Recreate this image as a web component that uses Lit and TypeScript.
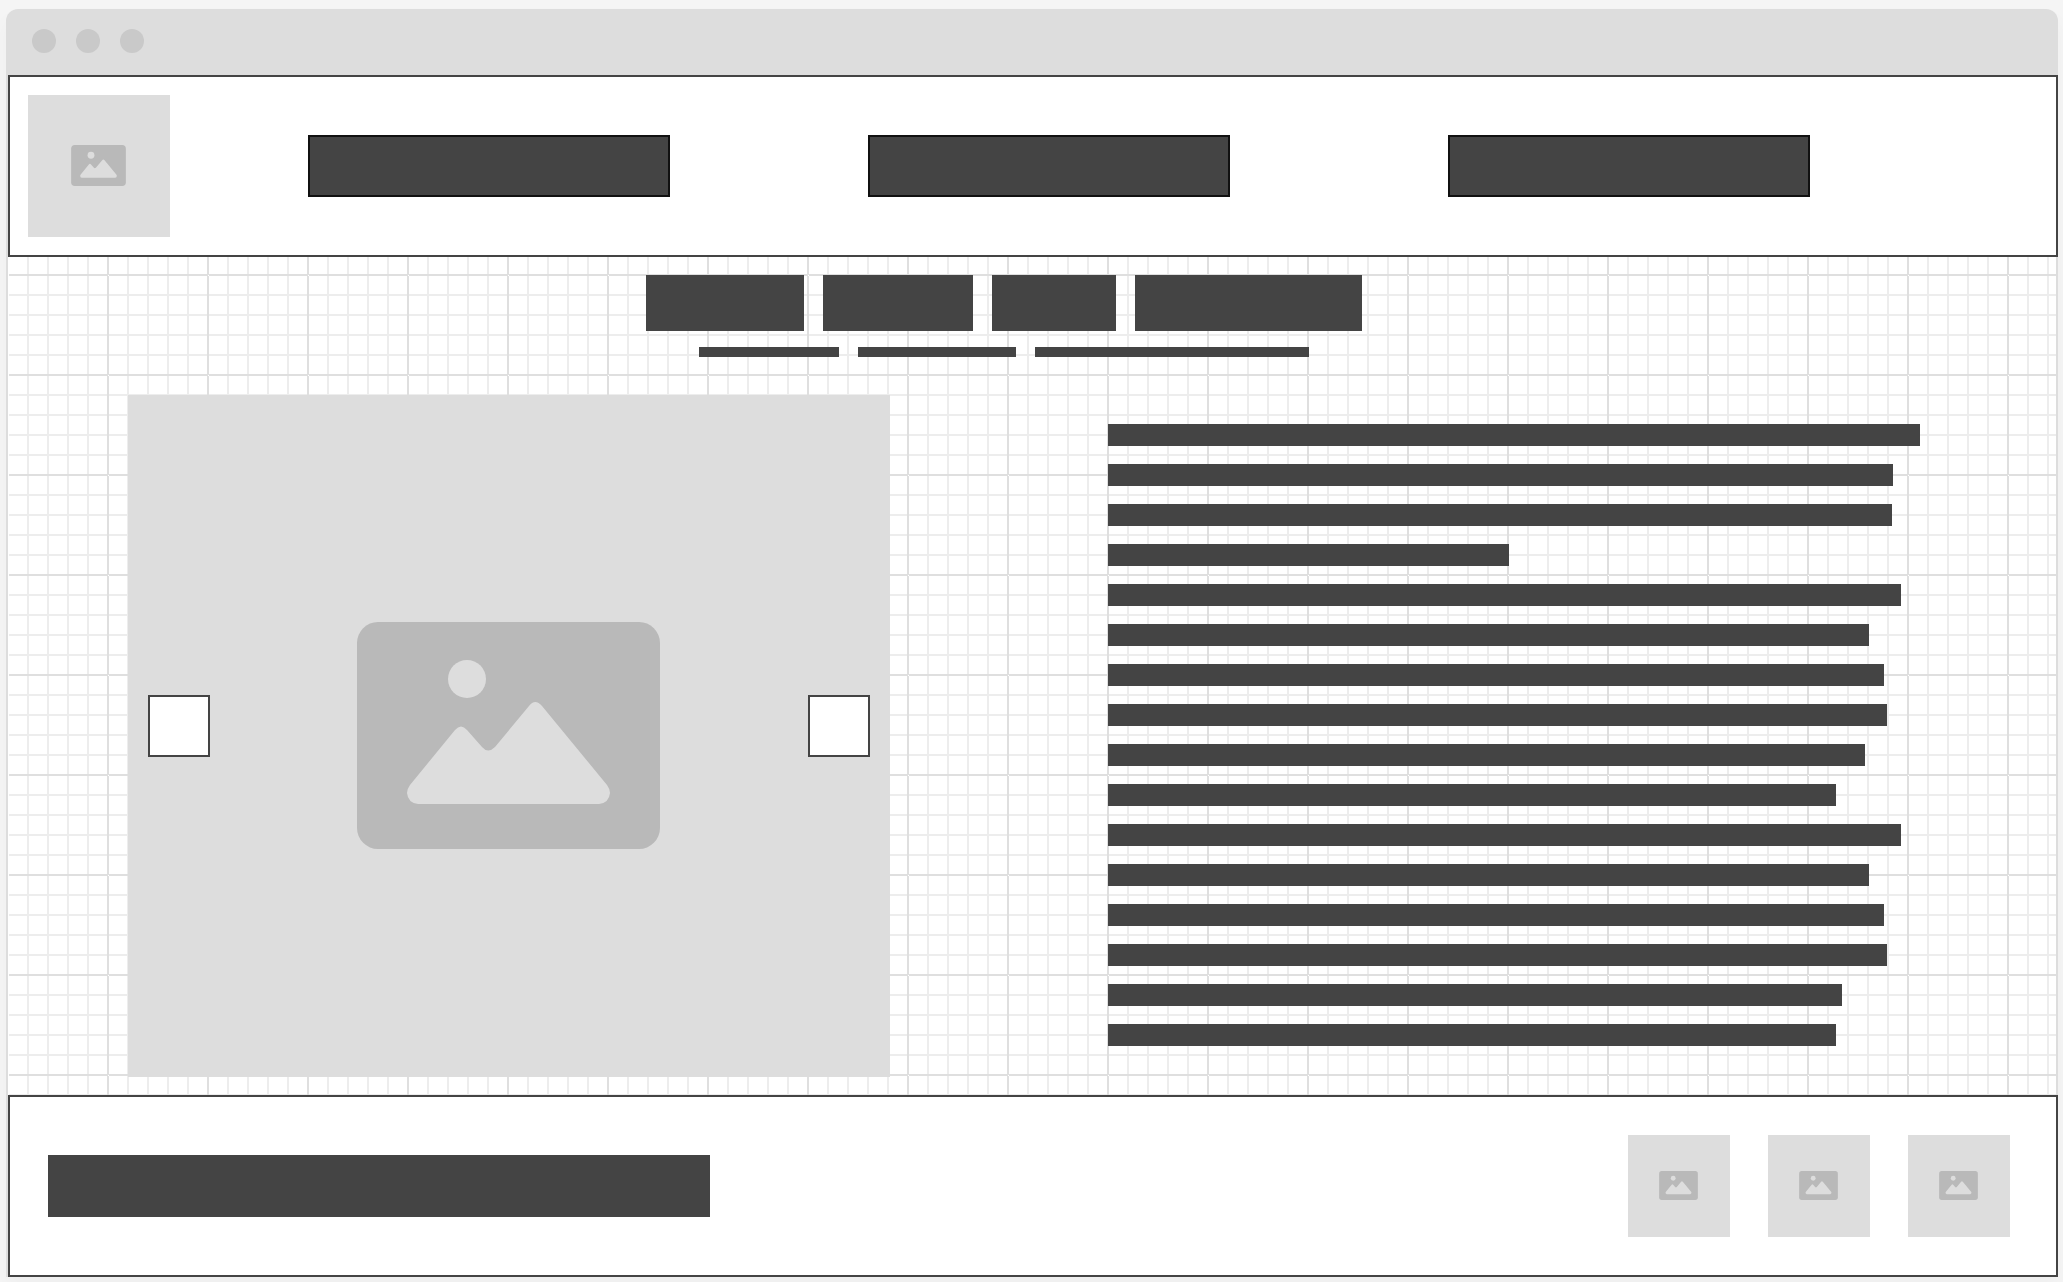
import { LitElement, html, css, svg } from "lit";
import { customElement, property } from "lit/decorators.js";
import { styleMap } from "lit/directives/style-map.js";

const NAV_ITEMS = ["First section", "Second section", "Third section"];
const TITLE_WORDS = [158, 150, 124, 227];
const SUBTITLE_WORDS = [140, 158, 274];
const LINES = [812, 785, 784, 401, 793, 761, 776, 779, 757, 728, 793, 761, 776, 779, 734, 728];

/** Grey box with a centred picture glyph. */
@customElement("image-placeholder")
export class ImagePlaceholder extends LitElement {
  @property() size: "small" | "medium" | "large" = "small";

  static styles = css`
    :host {
      display: block;
    }
    .box {
      display: grid;
      place-items: center;
      box-sizing: border-box;
      height: 100%;
      padding: 0 1px 1px 0;
      background: #ddd;
    }
    .icon {
      display: block;
    }
    .small {
      width: 39px;
      height: 29px;
    }
    .medium {
      width: 55px;
      height: 41px;
    }
    .large {
      width: 303px;
      height: 227px;
    }
  `;

  render() {
    return html`
      <div class="box">
        <svg class="icon ${this.size}" viewBox="0 0 303 227" aria-hidden="true">
          <rect width="303" height="227" rx="21" fill="#b9b9b9" />
          <circle cx="110" cy="57" r="19" fill="#ddd" />
          <path
            fill="#ddd"
            d="M53 163 98 108Q104 101 110 108L125 125Q131 132 138 125L172 84Q178 76 185 84L250 163Q253 167 253 171Q252 181 242 182H61Q51 181 50 171Q50 167 53 163Z"
          />
        </svg>
      </div>
    `;
  }
}

@customElement("app-root")
export class AppRoot extends LitElement {
  static styles = css`
    :host {
      display: block;
      box-sizing: border-box;
      min-height: 100vh;
      padding: 9px 5px 5px 6px;
      background: #f5f5f5;
      font-family: "Liberation Sans", sans-serif;
    }
    .window {
      border-radius: 12px 12px 0 0;
      background: #ddd;
      box-shadow: 0 10px 20px rgba(0, 0, 0, 0.03);
    }
    .titlebar {
      display: flex;
      align-items: center;
      gap: 20px;
      height: 66px;
      box-sizing: border-box;
      padding: 0 26px 2px;
    }
    .dot {
      width: 24px;
      height: 24px;
      border-radius: 50%;
      background: #c9c9c9;
    }
    .page {
      margin-left: 2px;
      background: #fff;
    }
    .header {
      display: grid;
      grid-template-columns: 142px 138fr 362px 198fr 362px 218fr 362px 228fr;
      align-items: center;
      padding: 18px;
      border: 2px solid #444;
    }
    .logo {
      height: 142px;
    }
    .nav {
      display: contents;
    }
    .nav-link {
      box-sizing: border-box;
      height: 62px;
      border: 2px solid #111;
      background: #444;
    }
    .nav-link:nth-child(1) {
      grid-column: 3;
    }
    .nav-link:nth-child(2) {
      grid-column: 5;
    }
    .nav-link:nth-child(3) {
      grid-column: 7;
    }
    .main {
      position: relative;
      padding: 18px 0;
      border-right: 2px solid #ddd;
    }
    .grid {
      position: absolute;
      inset: 0;
      width: 100%;
      height: 100%;
    }
    .content {
      position: relative;
    }
    .words {
      display: flex;
      justify-content: center;
      gap: 19px;
      margin: 0 56px 16px 0;
    }
    .subtitle {
      margin-bottom: 38px;
    }
    .word {
      height: 56px;
      background: #444;
    }
    .subtitle .word {
      height: 10px;
    }
    .columns {
      display: grid;
      grid-template-columns: 762fr 948fr;
      gap: 218px;
      padding-left: 120px;
    }
    .carousel {
      display: grid;
      grid-template-columns: 62px 1fr 62px;
      align-items: center;
      height: 682px;
      padding: 0 20px;
      background: #ddd;
    }
    .photo {
      height: 100%;
    }
    .arrow {
      width: 62px;
      height: 62px;
      margin: 0 0 20px;
      padding: 0;
      border: 2px solid #444;
      border-radius: 0;
      background: #fff;
    }
    .text {
      display: flex;
      flex-direction: column;
      gap: 18px;
      padding-top: 29px;
    }
    .line {
      height: 22px;
      background: #444;
    }
    .footer {
      display: flex;
      align-items: center;
      gap: 38px;
      padding: 38px 46px 38px 38px;
      border: 2px solid #444;
    }
    .notice {
      width: 662px;
      height: 62px;
      margin-right: auto;
      background: #444;
    }
    .social {
      width: 102px;
      height: 102px;
    }
  `;

  private renderGrid() {
    const minor = [20, 40, 60, 80];
    return html`
      <svg class="grid" aria-hidden="true">
        <defs>
          <pattern id="cells" x="0" y="18" width="100" height="100" patternUnits="userSpaceOnUse">
            ${minor.map((n) => svg`<rect x=${n - 1} y="0" width="2" height="100" fill="#ededed" />`)}
            ${minor.map((n) => svg`<rect x="0" y=${n - 1} width="100" height="2" fill="#ededed" />`)}
            <path d="M0 0H1V100H0ZM99 0H100V100H99ZM0 0H100V1H0ZM0 99H100V100H0Z" fill="#dfdfdf" />
            <rect width="1" height="1" fill="#fff" />
          </pattern>
        </defs>
        <rect x="1" width="100%" height="100%" fill="url(#cells)" />
      </svg>
    `;
  }

  private renderWords(widths: number[]) {
    return widths.map((w) => html`<span class="word" style=${styleMap({ width: `${w}px` })}></span>`);
  }

  render() {
    return html`
      <div class="window">
        <div class="titlebar">
          <span class="dot"></span><span class="dot"></span><span class="dot"></span>
        </div>
        <div class="page">
          <header class="header">
            <image-placeholder class="logo" size="medium"></image-placeholder>
            <nav class="nav">
              ${NAV_ITEMS.map((name) => html`<a class="nav-link" href="#" aria-label=${name}></a>`)}
            </nav>
          </header>
          <main class="main">
            ${this.renderGrid()}
            <div class="content">
              <div class="words">${this.renderWords(TITLE_WORDS)}</div>
              <div class="words subtitle">${this.renderWords(SUBTITLE_WORDS)}</div>
              <div class="columns">
                <section class="carousel">
                  <button class="arrow" type="button" aria-label="Previous"></button>
                  <image-placeholder class="photo" size="large"></image-placeholder>
                  <button class="arrow" type="button" aria-label="Next"></button>
                </section>
                <section class="text">
                  ${LINES.map((w) => html`<span class="line" style=${styleMap({ width: `${w}px` })}></span>`)}
                </section>
              </div>
            </div>
          </main>
          <footer class="footer">
            <div class="notice"></div>
            <image-placeholder class="social"></image-placeholder>
            <image-placeholder class="social"></image-placeholder>
            <image-placeholder class="social"></image-placeholder>
          </footer>
        </div>
      </div>
    `;
  }
}
